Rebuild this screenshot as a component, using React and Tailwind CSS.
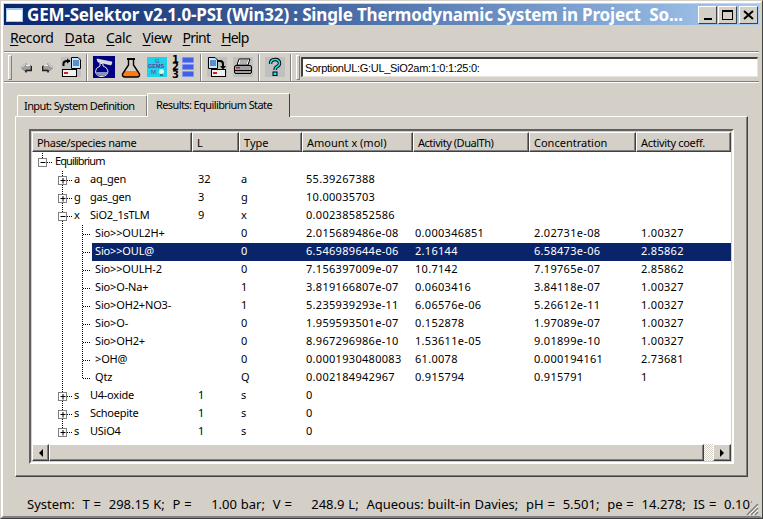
import React from "react";

const cols = [160, 47, 63, 111, 116, 107, 95];
const headerTrack = ["tracking-[-0.33px]", "", "", "", "tracking-[-0.47px]", "", "tracking-[-0.3px]"];

function Arrow({ flip }) {
  return (
    <svg width="12" height="11" viewBox="0 0 12 11" style={flip ? { transform: "scaleX(-1)" } : undefined}>
      <path d="M1 5.500 L6 1 V3.500 H11 V8 H6 V10 Z" fill="#a0a0a0" stroke="#808080" />
      <path d="M1.500 5.500L6 1.500M6 3.500H10" fill="none" stroke="#f0f0f0" />
      <path d="M6 8.500 H11.500 V4" fill="none" stroke="#202020" strokeWidth="1.500" />
      <path d="M6 10.500V8" fill="none" stroke="#202020" strokeWidth="1.500" />
    </svg>
  );
}
function Doc({ x = 0, y = 0 }) {
  return (
    <g transform={`translate(${x} ${y})`}>
      <path d="M.5.5H7L9.5 3V11.5H.5Z" fill="#bfe9ff" stroke="#000" />
      <path d="M2 4H8M2 6H8M2 8H8" stroke="#003090" />
    </g>
  );
}
function Slot({ x = 0, y = 0 }) {
  return (
    <g transform={`translate(${x} ${y})`}>
      <rect x=".5" y=".5" width="14" height="7" fill="#f0f0f0" stroke="#000" />
      <rect x="2" y="3" width="4" height="2" fill="#d02020" />
    </g>
  );
}
function ExportIcon() {
  return (
    <svg width="20" height="20" viewBox="0 0 20 20" className="bg-[#c0c0c0]">
      <Doc x={10} y={0} />
      <path d="M2.500 9V6.500Q2.500 4 6 4H9" fill="none" stroke="#000" strokeWidth="2" />
      <path d="M6 1.500L9.500 4L6 6.500Z" />
      <Slot x={1} y={12} />
    </svg>
  );
}
function ImportIcon() {
  return (
    <svg width="20" height="20" viewBox="0 0 20 20" className="bg-[#c0c0c0]">
      <Doc x={1} y={0} />
      <path d="M11 4H13Q16 4 16 7V10" fill="none" stroke="#000" strokeWidth="2" />
      <path d="M13 9H19L16 12.500Z" />
      <Slot x={4} y={12} />
    </svg>
  );
}
function BlueFlask() {
  return (
    <svg width="22" height="22" viewBox="0 0 22 22" className="bg-[#000080]">
      <path d="M4 3L19 6L18 9L5 6Z" fill="#d8d8d8" stroke="#fff" strokeWidth=".6" />
      <path d="M7 7V10Q2 12 2.500 16Q4 21 9 20.500Q15 20 15 15Q14 11 10 10V8Z" fill="none" stroke="#e8e8e8" />
      <path d="M3 16H14.500Q14 20 9 20Q4 20 3 16Z" fill="#8890c8" />
    </svg>
  );
}
function OrangeFlask() {
  return (
    <svg width="20" height="21" viewBox="0 0 20 21">
      <path d="M3.500 14H16.500L18 18Q18 20 16 20H4Q2 20 2 18Z" fill="#ff7a10" />
      <path d="M7.500 3V8L1.500 17Q1 20 4 20H16Q19 20 18.500 17L12.500 8V3" fill="none" stroke="#000" strokeWidth="1.400" />
      <path d="M6 2H14" stroke="#000" strokeWidth="2" />
    </svg>
  );
}
function CyanIcon() {
  return (
    <svg width="20" height="20" viewBox="0 0 20 20" className="bg-[#20d0e8]">
      <text x="8" y="6" fontSize="6" fill="#7030a0" fontFamily="Liberation Sans">G</text>
      <text x="1" y="11" fontSize="5.500" fill="#7030a0" fontWeight="700" fontFamily="Liberation Sans">GEMS</text>
      <text x="4" y="17" fontSize="6" fill="#7030a0" fontFamily="Liberation Sans">M</text>
      <circle cx="14.500" cy="14.500" r="2.500" fill="#d0fff0" />
      <rect x="13" y="17" width="3" height="2" fill="#208080" />
    </svg>
  );
}
function ListIcon() {
  return (
    <div className="flex items-center gap-[3px] w-[23px] h-[22px]">
      <div className="flex flex-col w-[7px] text-[10px] leading-[7.500px] font-bold text-black font-['DejaVu_Sans',sans-serif]">
        <span>1</span><span>2</span><span>3</span>
      </div>
      <div className="flex flex-col gap-[1px]">
        <div className="w-[12px] h-[6px] bg-[#4060e8] border border-[#8090f0] rounded-[1px]" />
        <div className="w-[12px] h-[6px] bg-[#4060e8] border border-[#8090f0] rounded-[1px]" />
        <div className="w-[12px] h-[6px] bg-[#4060e8] border border-[#8090f0] rounded-[1px]" />
      </div>
    </div>
  );
}
function PrinterIcon() {
  return (
    <svg width="20" height="20" viewBox="0 0 20 20" className="bg-[#c0c0c0]">
      <path d="M6 2H17L15 8H4Z" fill="#fff" stroke="#000" />
      <path d="M7 4H15M6.500 6H14" stroke="#606060" />
      <rect x="1.500" y="8.500" width="17" height="8" rx="1.500" fill="#a0a0a0" stroke="#000" />
      <rect x="3" y="10" width="4" height="1.500" fill="#d02020" />
      <path d="M2 13.500H18" stroke="#000" />
    </svg>
  );
}
function HelpIcon() {
  return (
    <svg width="20" height="20" viewBox="0 0 20 20" className="bg-[#c0c0c0]">
      <path d="M5.500 7Q5.500 2.500 10 2.500Q14.500 2.500 14.500 6.500Q14.500 8.500 11.500 10Q10 11 10 13" fill="none" stroke="#000" strokeWidth="3.400" />
      <path d="M5.500 7Q5.500 2.500 10 2.500Q14.500 2.500 14.500 6.500Q14.500 8.500 11.500 10Q10 11 10 13" fill="none" stroke="#20e0e8" strokeWidth="1.600" />
      <rect x="8" y="15" width="4" height="3.500" fill="#20e0e8" stroke="#000" />
    </svg>
  );
}
function Sep() {
  return <div className="w-[2px] h-[27px] border-l border-r border-l-[#808080] border-r-white" />;
}

function Box({ cx, cy, open }) {
  return (
    <g>
      <rect x={cx - 4} y={cy - 4} width="8" height="8" fill="#fff" stroke="#808080" />
      <path d={`M${cx - 2} ${cy}H${cx + 3}`} stroke="#000" />
      {!open && <path d={`M${cx + .5} ${cy - 2.500}V${cy + 3}`} stroke="#000" />}
    </g>
  );
}
const dot = { stroke: "#000", strokeDasharray: "1 1", fill: "none" };

function Gutter({ level, open, last, subLast }) {
  const cy = 9.500;
  if (level === 0)
    return (
      <svg width="23" height="18" className="shrink-0">
        <path d="M10.500 0V5M15 9.500H21" style={dot} />
        <Box cx={10.500} cy={cy} open />
      </svg>
    );
  if (level === 1)
    return (
      <svg width="42" height="18" className="shrink-0">
        <path d={`M30.500 0V${last ? 5 : 18}M35 9.500H40`} style={dot} />
        <Box cx={30.500} cy={cy} open={open} />
      </svg>
    );
  return (
    <svg width="60" height="18" className="shrink-0">
      <path d={`M30.500 0V18M50.500 0V${subLast ? 9.500 : 18}M51 9.500H${59}`} style={dot} />
    </svg>
  );
}

const top = [
  ["a", "aq_gen", "32", "a", "55.39267388"],
  ["g", "gas_gen", "3", "g", "10.00035703"],
  ["x", "SiO2_1sTLM", "9", "x", "0.002385852586"],
];
const subs = [
  ["Sio>>OUL2H+", "0", "2.015689486e-08", "0.000346851", "2.02731e-08", "1.00327"],
  ["Sio>>OUL@", "0", "6.546989644e-06", "2.16144", "6.58473e-06", "2.85862"],
  ["Sio>>OULH-2", "0", "7.156397009e-07", "10.7142", "7.19765e-07", "2.85862"],
  ["Sio>O-Na+", "1", "3.819166807e-07", "0.0603416", "3.84118e-07", "1.00327"],
  ["Sio>OH2+NO3-", "1", "5.235939293e-11", "6.06576e-06", "5.26612e-11", "1.00327"],
  ["Sio>O-", "0", "1.959593501e-07", "0.152878", "1.97089e-07", "1.00327"],
  ["Sio>OH2+", "0", "8.967296986e-10", "1.53611e-05", "9.01899e-10", "1.00327"],
  [">OH@", "0", "0.0001930480083", "61.0078", "0.000194161", "2.73681"],
  ["Qtz", "Q", "0.002184942967", "0.915794", "0.915791", "1"],
];
const bottom = [
  ["s", "U4-oxide", "1", "s", "0"],
  ["s", "Schoepite", "1", "s", "0"],
  ["s", "USiO4", "1", "s", "0"],
];

function Cell({ w, children, num }) {
  return (
    <div style={{ width: w }} className={`shrink-0 pl-[4px] mb-[2px] whitespace-nowrap overflow-hidden ${num ? "tracking-[0.3px]" : ""}`}>
      {children}
    </div>
  );
}

function TopRow({ r, open, last }) {
  return (
    <div className="flex h-[18px] items-center">
      <div className="w-[162px] shrink-0 flex items-center">
        <Gutter level={1} open={open} last={last} />
        <span className="w-[16px] mb-[2px]">{r[0]}</span>
        <span className="mb-[2px] tracking-[-0.25px]">{r[1]}</span>
      </div>
      <Cell w={43}>{r[2]}</Cell>
      <Cell w={65}>{r[3]}</Cell>
      <Cell w={109} num>{r[4]}</Cell>
    </div>
  );
}

function SubRow({ r, last, sel }) {
  return (
    <div className="flex h-[18px] items-center">
      <Gutter level={2} subLast={last} />
      <div className={`flex flex-1 h-[18px] items-center ${sel ? "bg-[#0a246a] text-white" : ""}`}>
        <div className="w-[100px] shrink-0 pl-[3px] mb-[2px] whitespace-nowrap tracking-[-0.15px]">{r[0]}</div>
        <div className="w-[45px] shrink-0" />
        <Cell w={65}>{r[1]}</Cell>
        <Cell w={109} num>{r[2]}</Cell>
        <Cell w={119} num>{r[3]}</Cell>
        <Cell w={107} num>{r[4]}</Cell>
        <Cell w={84} num>{r[5]}</Cell>
      </div>
    </div>
  );
}

const raised = "border border-t-white border-l-white border-r-[#404040] border-b-[#404040] bg-[#d4d0c8]";

function WinBtn({ children, className = "" }) {
  return (
    <div className={`w-[19px] h-[18px] flex items-center justify-center ${raised} ${className}`}>
      {children}
    </div>
  );
}

export default function App() {
  const headers = ["Phase/species name", "L", "Type", "Amount x (mol)", "Activity (DualTh)", "Concentration", "Activity coeff."];
  return (
    <div className="w-[763px] h-[519px] bg-[#d4d0c8] flex flex-col overflow-hidden border border-t-[#d4d0c8] border-l-[#d4d0c8] border-r-[#404040] border-b-[#404040] text-black font-['Noto_Sans',sans-serif] text-[11px] leading-[14px]">
      <div className="flex-1 flex flex-col border-2 border-t-white border-l-white border-r-[#d4d0c8] border-b-[#808080] px-[1px] pt-[1px] min-h-0">
        {/* title */}
        <div className="h-[21px] shrink-0 flex items-center pl-[2px] pr-[1px] bg-gradient-to-r from-[#0a246a] to-[#a6caf0]">
          <div className="w-[17px] h-[14px] bg-white border border-[#a6caf0] border-t-2 shrink-0" />
          <div className="ml-[4px] flex-1 text-white font-bold text-[17px] leading-[20px] tracking-[-0.16px] whitespace-pre overflow-hidden">
            GEM-Selektor v2.1.0-PSI (Win32) : Single Thermodynamic System in Project  So...
          </div>
          <div className="flex items-center shrink-0">
            <WinBtn>
              <div className="w-[8px] h-[2px] bg-black mt-[8px]" />
            </WinBtn>
            <WinBtn className="ml-[1px]">
              <div className="w-[11px] h-[10px] border border-black border-t-2" />
            </WinBtn>
            <WinBtn className="ml-[2px]">
              <svg width="11" height="10" viewBox="0 0 11 10"><path d="M1 1L10 9M10 1L1 9" stroke="#000" strokeWidth="2" /></svg>
            </WinBtn>
          </div>
        </div>
        {/* menu */}
        <div className="h-[25px] shrink-0 flex items-center gap-[11px] pl-[6px] pt-[1px] text-[14px] leading-[18px] tracking-[-0.4px]">
          <span><u className="underline-offset-2">R</u>ecord</span>
          <span className="tracking-[-0.1px]"><u className="underline-offset-2">D</u>ata</span>
          <span><u className="underline-offset-2">C</u>alc</span>
          <span><u className="underline-offset-2">V</u>iew</span>
          <span className="tracking-[-0.8px]"><u className="underline-offset-2">P</u>rint</span>
          <span className="tracking-[-0.8px]"><u className="underline-offset-2">H</u>elp</span>
        </div>
        {/* toolbar */}
        <div className="mt-[2px] h-[30px] shrink-0 flex items-center border-t border-b border-t-white border-b-[#808080] shadow-[0_-1px_0_#808080,0_1px_0_#fff]">
          <div className="ml-[4px] w-[4px] h-[25px] border border-t-white border-l-white border-r-[#808080] border-b-[#808080]" />
          <div className="ml-[8px] w-[12px] flex"><Arrow /></div>
          <div className="ml-[10px] w-[12px] flex"><Arrow flip /></div>
          <div className="ml-[7px] flex"><ExportIcon /></div>
          <div className="ml-[5px]"><Sep /></div>
          <div className="ml-[5px] flex"><BlueFlask /></div>
          <div className="ml-[6px] flex"><OrangeFlask /></div>
          <div className="ml-[6px] flex"><CyanIcon /></div>
          <div className="ml-[5px] flex"><ListIcon /></div>
          <div className="ml-[5px]"><Sep /></div>
          <div className="ml-[5px] flex"><ImportIcon /></div>
          <div className="ml-[6px] flex"><PrinterIcon /></div>
          <div className="ml-[5px]"><Sep /></div>
          <div className="ml-[5px] flex"><HelpIcon /></div>
          <div className="ml-[5px]"><Sep /></div>
          <div className="ml-[4px] w-[4px] h-[25px] border border-t-white border-l-white border-r-[#808080] border-b-[#808080]" />
          <div className="ml-[1px] flex-1 mr-[1px] h-[20px] bg-white border border-t-2 border-l-2 border-t-[#404040] border-l-[#404040] border-r-[#e8e4dc] border-b-[#e8e4dc] flex items-center pl-[2px] font-['Liberation_Sans',sans-serif] text-[11px] tracking-[-0.3px]">
            SorptionUL:G:UL_SiO2am:1:0:1:25:0:
          </div>
        </div>
        {/* tabs */}
        <div className="mt-[10px] ml-[12px] h-[24px] shrink-0 flex items-end relative z-10 whitespace-nowrap tracking-[-0.6px]">
          <div className="ml-[1px] w-[130px] h-[21px] pl-[6px] pt-[3px] border border-b-0 border-t-white border-l-white border-r-[#808080] rounded-t-[2px]">
            Input: System Definition
          </div>
          <div className="w-[143px] h-[24px] pl-[8px] pt-[4px] -mb-[1px] bg-[#d4d0c8] border border-b-0 border-t-white border-l-white border-r-[#404040] rounded-t-[2px]">
            Results: Equilibrium State
          </div>
        </div>
        {/* panel */}
        <div className="ml-[11px] w-[733px] h-[361px] shrink-0 border border-t-white border-l-white border-r-[#404040] border-b-[#404040] shadow-[inset_-1px_-1px_0_#808080] pl-[13px] pr-[12px] pt-[12px]">
          <div className="w-[705px] h-[335px] border-2 border-t-[#606060] border-l-[#606060] border-r-white border-b-white p-[1px] flex flex-col">
            <div className="h-[20px] shrink-0 flex">
              {headers.map((h, i) => (
                <div key={h} style={{ width: cols[i] }} className={`h-[20px] shrink-0 pl-[4px] pt-[3px] whitespace-nowrap overflow-hidden ${headerTrack[i]} ${raised} shadow-[inset_-1px_-1px_0_#808080]`}>
                  {h}
                </div>
              ))}
            </div>
            <div className="flex-1 bg-white pt-[1px] min-h-0 overflow-hidden">
              <div className="flex h-[18px] items-center">
                <Gutter level={0} />
                <span className="mb-[2px] tracking-[-0.9px]">Equilibrium</span>
              </div>
              <TopRow r={top[0]} />
              <TopRow r={top[1]} />
              <TopRow r={top[2]} open />
              {subs.map((r, i) => (
                <SubRow key={r[0]} r={r} sel={i === 1} last={i === subs.length - 1} />
              ))}
              {bottom.map((r, i) => (
                <TopRow key={r[1]} r={r} last={i === 2} />
              ))}
            </div>
            <div className="h-[17px] shrink-0 flex bg-[#d4d0c8]">
              <div className={`w-[17px] flex items-center justify-center ${raised} shadow-[inset_-1px_-1px_0_#808080]`}>
                <div className="w-0 h-0 border-y-[4px] border-y-transparent border-r-[4px] border-r-black" />
              </div>
              <div className={`flex-1 ${raised} shadow-[inset_-1px_-1px_0_#808080]`} />
              <div className="w-[9px] bg-[repeating-conic-gradient(#ffffff_0_25%,#d4d0c8_0_50%)] bg-[length:2px_2px]" />
              <div className={`w-[18px] flex items-center justify-center ${raised} shadow-[inset_-1px_-1px_0_#808080]`}>
                <div className="w-0 h-0 border-y-[4px] border-y-transparent border-l-[4px] border-l-black" />
              </div>
            </div>
          </div>
        </div>
        {/* status */}
        <div className="flex-1 min-h-0 relative flex items-end pb-[3px] pl-[23px] pr-[6px]">
          <div className="overflow-hidden whitespace-pre text-[13px] leading-[17px] w-[725px] [word-spacing:0.5px]">
            {"System:  T =  298.15 K;  P =     1.00 bar;  V =     248.9 L;  Aqueous: built-in Davies;  pH =  5.501;  pe =  14.278;  IS =  0.101"}
          </div>
          <svg width="13" height="13" viewBox="0 0 13 13" className="absolute right-0 bottom-0">
            <path d="M12 1L1 12M12 5L5 12M12 9L9 12" stroke="#808080" strokeWidth="1.500" />
            <path d="M12 3L3 12M12 7L7 12" stroke="#fff" />
          </svg>
        </div>
      </div>
    </div>
  );
}
